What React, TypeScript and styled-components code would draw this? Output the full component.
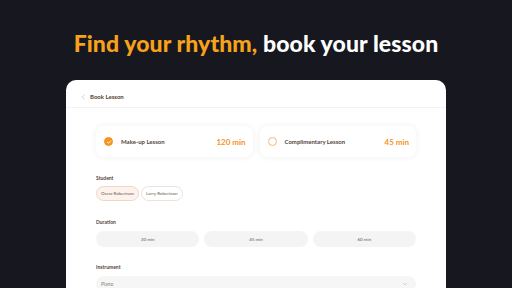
import React, { useState } from "react";
import { createGlobalStyle, styled } from "styled-components";

const GlobalStyle = createGlobalStyle`
  html, body {
    margin: 0;
    padding: 0;
    background: #17171f;
    height: 100%;
    overflow: hidden;
  }
  * {
    box-sizing: border-box;
  }
`;

const Page = styled.div`
  width: 512px;
  height: 288px;
  overflow: hidden;
  display: flex;
  flex-direction: column;
  align-items: center;
  font-family: "Lato", "Inter", sans-serif;
`;

const Heading = styled.h1`
  margin: 29px 0 0;
  height: 28px;
  font-family: "Lato", sans-serif;
  font-weight: 900;
  font-size: 23px;
  line-height: 28px;
  color: #ffffff;
  letter-spacing: 0.1px;
`;

const Accent = styled.span`
  color: #f7a21b;
`;

const Panel = styled.main`
  margin-top: 23px;
  width: 380px;
  flex: 1;
  background: #ffffff;
  border-radius: 10px 10px 0 0;
`;

const PanelHeader = styled.header`
  height: 28px;
  display: flex;
  align-items: center;
  gap: 4px;
  padding: 6px 14px 0 15px;
  border-bottom: 1px solid #f4f3f2;
  font-size: 6px;
  font-weight: 700;
  color: #4d3c30;
`;

const Back = styled.span`
  display: flex;
  align-items: center;
`;

const Body = styled.div`
  padding: 18px 30px 0;
`;

const LessonRow = styled.div`
  display: grid;
  grid-template-columns: 1fr 1fr;
  gap: 7px;
`;

const LessonCard = styled.div`
  height: 31px;
  display: flex;
  align-items: center;
  padding: 0 7px 0 8px;
  border-radius: 8px;
  background: #ffffff;
  box-shadow: 0 0 6px rgba(60, 40, 20, 0.07);
  cursor: pointer;
`;

const Radio = styled.span<{ $on: boolean }>`
  width: 9px;
  height: 9px;
  border-radius: 50%;
  flex-shrink: 0;
  display: flex;
  align-items: center;
  justify-content: center;
  background: ${(p) => (p.$on ? "#f7921f" : "#ffffff")};
  border: 1px solid ${(p) => (p.$on ? "#f7921f" : "#f6b47a")};
`;

const LessonName = styled.span`
  margin-left: 8px;
  font-size: 6px;
  font-weight: 700;
  color: #54463d;
  flex: 1;
`;

const LessonTime = styled.span`
  font-size: 8px;
  font-weight: 700;
  color: #f7921f;
`;

const Label = styled.div<{ $top: number }>`
  margin-top: ${(p) => p.$top}px;
  font-size: 5px;
  font-weight: 700;
  color: #54463d;
  height: 8px;
  line-height: 8px;
`;

const Chips = styled.div`
  margin-top: 4px;
  display: flex;
  gap: 2px;
`;

const Chip = styled.button<{ $on: boolean }>`
  height: 15px;
  padding: 0 4px;
  border-radius: 8px;
  font-family: "Lato", sans-serif;
  font-size: 4.5px;
  color: #6a5a50;
  background: ${(p) => (p.$on ? "#fdf3ec" : "#ffffff")};
  border: 1px solid ${(p) => (p.$on ? "#ecd7c8" : "#e9e3de")};
`;

const Durations = styled.div`
  margin-top: 5px;
  display: grid;
  grid-template-columns: repeat(3, 1fr);
  gap: 5px;
`;

const DurationBtn = styled.button`
  height: 16px;
  border: none;
  border-radius: 8px;
  background: #f4f4f4;
  font-family: "Lato", sans-serif;
  font-size: 4.5px;
  color: #6a5a50;
`;

const Select = styled.div`
  margin-top: 5px;
  height: 16px;
  border-radius: 8px;
  background: #f6f6f6;
  display: flex;
  align-items: center;
  justify-content: space-between;
  padding: 0 8px 0 5px;
  font-size: 5px;
  color: #8a7f78;
`;

const lessons = [
  { name: "Make-up Lesson", time: "120 min" },
  { name: "Complimentary Lesson", time: "45 min" },
];

export default function App() {
  const [lesson, setLesson] = useState(0);
  const [student, setStudent] = useState(0);

  return (
    <>
      <GlobalStyle />
      <Page>
        <Heading>
          <Accent>Find your rhythm,</Accent> book your lesson
        </Heading>
        <Panel>
          <PanelHeader>
            <Back>
              <svg width="5" height="6" viewBox="0 0 5 6">
                <path d="M3.5 0.6 L1.2 3 L3.5 5.4" fill="none" stroke="#b9b3ae" strokeWidth="0.6" />
              </svg>
            </Back>
            Book Lesson
          </PanelHeader>
          <Body>
            <LessonRow>
              {lessons.map((l, i) => (
                <LessonCard key={l.name} onClick={() => setLesson(i)}>
                  <Radio $on={lesson === i}>
                    {lesson === i && (
                      <svg width="6" height="6" viewBox="0 0 10 10">
                        <path
                          d="M2.2 5.2 L4.2 7.1 L7.9 3.2"
                          fill="none"
                          stroke="#fff"
                          strokeWidth="1.6"
                          strokeLinecap="round"
                          strokeLinejoin="round"
                        />
                      </svg>
                    )}
                  </Radio>
                  <LessonName>{l.name}</LessonName>
                  <LessonTime>{l.time}</LessonTime>
                </LessonCard>
              ))}
            </LessonRow>

            <Label $top={17}>Student</Label>
            <Chips>
              {["Oscar Robertson", "Larry Robertson"].map((s, i) => (
                <Chip key={s} $on={student === i} onClick={() => setStudent(i)}>
                  {s}
                </Chip>
              ))}
            </Chips>

            <Label $top={17}>Duration</Label>
            <Durations>
              <DurationBtn>30 min</DurationBtn>
              <DurationBtn>45 min</DurationBtn>
              <DurationBtn>60 min</DurationBtn>
            </Durations>

            <Label $top={16}>Instrument</Label>
            <Select>
              Piano
              <svg width="6" height="4" viewBox="0 0 6 4">
                <path d="M1 1 L3 3 L5 1" fill="none" stroke="#c9c4c0" strokeWidth="0.7" />
              </svg>
            </Select>
          </Body>
        </Panel>
      </Page>
    </>
  );
}
